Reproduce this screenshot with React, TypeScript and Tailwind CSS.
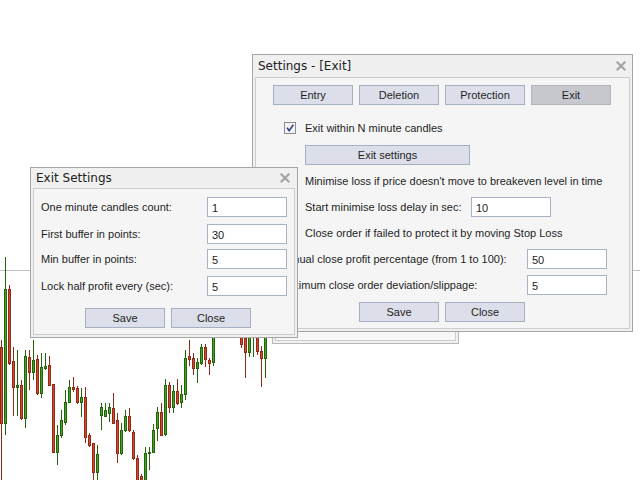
import React from "react";

type C = [number, "g" | "r", number, number, number, number];

const candles: C[] = [
  [0, "r", 347, 423, 340, 480],
  [4, "g", 289, 423, 257, 435],
  [8, "r", 289, 363, 285, 365],
  [12, "r", 361, 387, 347, 416],
  [16, "g", 385, 387, 350, 416],
  [20, "r", 385, 418, 380, 420],
  [24, "g", 356, 418, 350, 428],
  [28, "r", 357, 372, 350, 390],
  [32, "g", 360, 372, 340, 380],
  [36, "r", 359, 393, 355, 395],
  [40, "g", 367, 393, 353, 398],
  [44, "g", 366, 368, 353, 370],
  [48, "r", 365, 385, 356, 386],
  [52, "r", 384, 452, 384, 452],
  [56, "g", 435, 452, 425, 465],
  [60, "g", 420, 435, 410, 438],
  [64, "g", 402, 422, 390, 425],
  [68, "g", 387, 402, 380, 403],
  [72, "r", 387, 389, 377, 392],
  [76, "r", 388, 402, 386, 404],
  [80, "g", 397, 402, 388, 417],
  [84, "r", 397, 437, 387, 443],
  [88, "r", 435, 445, 433, 447],
  [92, "r", 443, 472, 443, 480],
  [96, "g", 454, 472, 445, 480],
  [100, "g", 407, 415, 403, 430],
  [104, "g", 410, 416, 403, 417],
  [108, "g", 407, 413, 403, 422],
  [112, "r", 408, 423, 393, 423],
  [116, "r", 420, 453, 413, 463],
  [120, "g", 430, 453, 423, 455],
  [124, "g", 416, 430, 410, 432],
  [128, "r", 416, 430, 408, 432],
  [132, "r", 432, 458, 430, 460],
  [136, "r", 458, 485, 455, 490],
  [140, "r", 476, 495, 474, 495],
  [144, "g", 453, 482, 447, 490],
  [148, "g", 452, 453, 447, 470],
  [152, "g", 430, 452, 424, 453],
  [156, "g", 412, 428, 407, 441],
  [160, "r", 412, 435, 403, 436],
  [164, "g", 385, 434, 379, 436],
  [168, "r", 385, 407, 382, 413],
  [172, "g", 391, 407, 385, 413],
  [176, "r", 391, 403, 379, 405],
  [180, "g", 394, 402, 385, 408],
  [184, "g", 358, 394, 350, 400],
  [188, "r", 356, 359, 340, 366],
  [192, "r", 358, 368, 353, 375],
  [196, "g", 362, 368, 358, 383],
  [200, "g", 347, 363, 344, 365],
  [204, "r", 347, 359, 344, 367],
  [208, "r", 360, 363, 358, 375],
  [212, "g", 330, 362, 320, 366],
  [216, "g", 300, 330, 290, 334],
  [220, "r", 300, 318, 292, 325],
  [224, "g", 280, 318, 270, 322],
  [228, "r", 280, 300, 275, 310],
  [232, "r", 300, 320, 290, 328],
  [236, "r", 320, 334, 312, 336],
  [240, "r", 335, 344, 330, 348],
  [244, "r", 338, 352, 333, 378],
  [248, "g", 330, 352, 325, 357],
  [252, "g", 320, 335, 315, 357],
  [256, "r", 330, 351, 325, 355],
  [260, "r", 351, 358, 346, 387],
  [264, "g", 325, 358, 320, 378],
];

function Chart() {
  return (
    <svg width={640} height={480} className="absolute left-0 top-0" shapeRendering="crispEdges">
      <line x1={0} y1={270.5} x2={640} y2={270.5} stroke="#c0c0c0" strokeWidth={1} />
      {candles.map(([x, c, bt, bb, wt, wb], i) => {
        const dark = c === "g" ? "#246210" : "#8f2b18";
        const fill = c === "g" ? "#45a51c" : "#d4492c";
        return (
          <g key={i}>
            <line x1={x + 1.5} y1={wt} x2={x + 1.5} y2={wb} stroke={dark} strokeWidth={1} />
            <rect x={x + 0.5} y={bt + 0.5} width={2} height={Math.max(1, bb - bt)} fill={fill} stroke={dark} strokeWidth={1} />
          </g>
        );
      })}
    </svg>
  );
}

function CloseX() {
  return (
    <svg width={10} height={10} viewBox="0 0 10 10">
      <path d="M1.5 1.5 L8.5 8.5 M8.5 1.5 L1.5 8.5" stroke="#a3a3a3" strokeWidth={2.2} strokeLinecap="square" />
    </svg>
  );
}

const body = "font-['Liberation_Sans',Arial,sans-serif] text-[11px] text-[#1e1e1e]";

function Btn({ label, w = 80, active = false }: { label: string; w?: number; active?: boolean }) {
  return (
    <div
      className={
        "h-[20px] flex items-center justify-center border " +
        (active ? "bg-[#c7c8ce] border-[#b4b5ba]" : "bg-[#dcdfe9] border-[#a5afc2]")
      }
      style={{ width: w }}
    >
      <span className="leading-none">{label}</span>
    </div>
  );
}

function Input({ value }: { value: string }) {
  return (
    <div className="w-[80px] h-[20px] bg-white border border-[#a8b3c7] flex items-center pl-[4px] pt-[2px]">
      <span className="leading-none">{value}</span>
    </div>
  );
}

function CheckBox() {
  return (
    <svg width={12} height={12} viewBox="0 0 12 12">
      <rect x={0.5} y={0.5} width={11} height={11} fill="#f3f3f5" stroke="#8c8c8c" />
      <path d="M3 5.8 L5.2 8.6 L9.3 2.8" stroke="#34418a" strokeWidth={1.6} fill="none" />
    </svg>
  );
}

function SettingsWindow() {
  return (
    <div className={"absolute left-[252px] top-[54px] w-[381px] h-[278px] border border-[#a6a6a6] bg-[#f0f0f0] flex flex-col px-[2px] pb-[2px] " + body}>
      <div className="h-[22px] flex items-center justify-between pl-[3px] pr-[4px] shrink-0">
        <span className="font-['DejaVu_Sans',sans-serif] text-[12px] text-[#222] leading-none">Settings - [Exit]</span>
        <CloseX />
      </div>
      <div className="flex-1 border border-[#cdcdcd] bg-[#f5f5f5] flex flex-col overflow-hidden">
        <div className="mt-[7px] pl-[17px] flex gap-[6px]">
          <Btn label="Entry" />
          <Btn label="Deletion" />
          <Btn label="Protection" />
          <Btn label="Exit" active />
        </div>
        <div className="mt-[17px] pl-[28px] h-[12px] flex items-center gap-[9px]">
          <CheckBox />
          <span className="leading-none">Exit within N minute candles</span>
        </div>
        <div className="mt-[11px] pl-[49px]">
          <Btn label="Exit settings" w={165} />
        </div>
        <div className="mt-[8px] pl-[49px] h-[16px] flex items-center">
          <span className="leading-none">Minimise loss if price doesn't move to breakeven level in time</span>
        </div>
        <div className="mt-[8px] pl-[49px] flex items-center">
          <span className="w-[166px] leading-none">Start minimise loss delay in sec:</span>
          <Input value="10" />
        </div>
        <div className="mt-[8px] pl-[49px] h-[16px] flex items-center">
          <span className="leading-none">Close order if failed to protect it by moving Stop Loss</span>
        </div>
        <div className="mt-[8px] pl-[22px] flex items-center">
          <span className="w-[249px] leading-none whitespace-nowrap">Manual close profit percentage (from 1 to 100):</span>
          <Input value="50" />
        </div>
        <div className="mt-[6px] pl-[22px] flex items-center">
          <span className="w-[249px] leading-none whitespace-nowrap">Maximum close order deviation/slippage:</span>
          <Input value="5" />
        </div>
        <div className="mt-[7px] pl-[103px] flex gap-[6px]">
          <Btn label="Save" />
          <Btn label="Close" />
        </div>
      </div>
    </div>
  );
}

function ExitSettingsWindow() {
  const rows: [string, string, string][] = [
    ["One minute candles count:", "1", "mt-[8px]"],
    ["First buffer in points:", "30", "mt-[7px]"],
    ["Min buffer in points:", "5", "mt-[5px]"],
    ["Lock half profit every (sec):", "5", "mt-[7px]"],
  ];
  return (
    <div className={"absolute left-[30px] top-[167px] w-[268px] h-[171px] border border-[#a6a6a6] bg-[#f0f0f0] flex flex-col px-[2px] pb-[2px] " + body}>
      <div className="h-[20px] flex items-center justify-between pl-[3px] pr-[5px] shrink-0">
        <span className="font-['DejaVu_Sans',sans-serif] text-[12px] text-[#222] leading-none">Exit Settings</span>
        <CloseX />
      </div>
      <div className="flex-1 border border-[#cdcdcd] bg-[#f5f5f5] flex flex-col">
        {rows.map(([l, v, m]) => (
          <div key={l} className={m + " pl-[7px] flex items-center"}>
            <span className="w-[166px] leading-none">{l}</span>
            <Input value={v} />
          </div>
        ))}
        <div className="mt-[12px] pl-[51px] flex gap-[6px]">
          <Btn label="Save" />
          <Btn label="Close" />
        </div>
      </div>
    </div>
  );
}

function BehindWindow() {
  return (
    <div className="absolute left-[272px] top-[150px] w-[187px] h-[194px] border border-[#b9b9b9] bg-[#f0f0f0] p-[2px]">
      <div className="w-full h-full border border-[#cdcdcd] bg-[#f7f7f7]" />
    </div>
  );
}

export default function App() {
  return (
    <div className="relative w-[640px] h-[480px] bg-white overflow-hidden">
      <Chart />
      <BehindWindow />
      <SettingsWindow />
      <ExitSettingsWindow />
    </div>
  );
}
